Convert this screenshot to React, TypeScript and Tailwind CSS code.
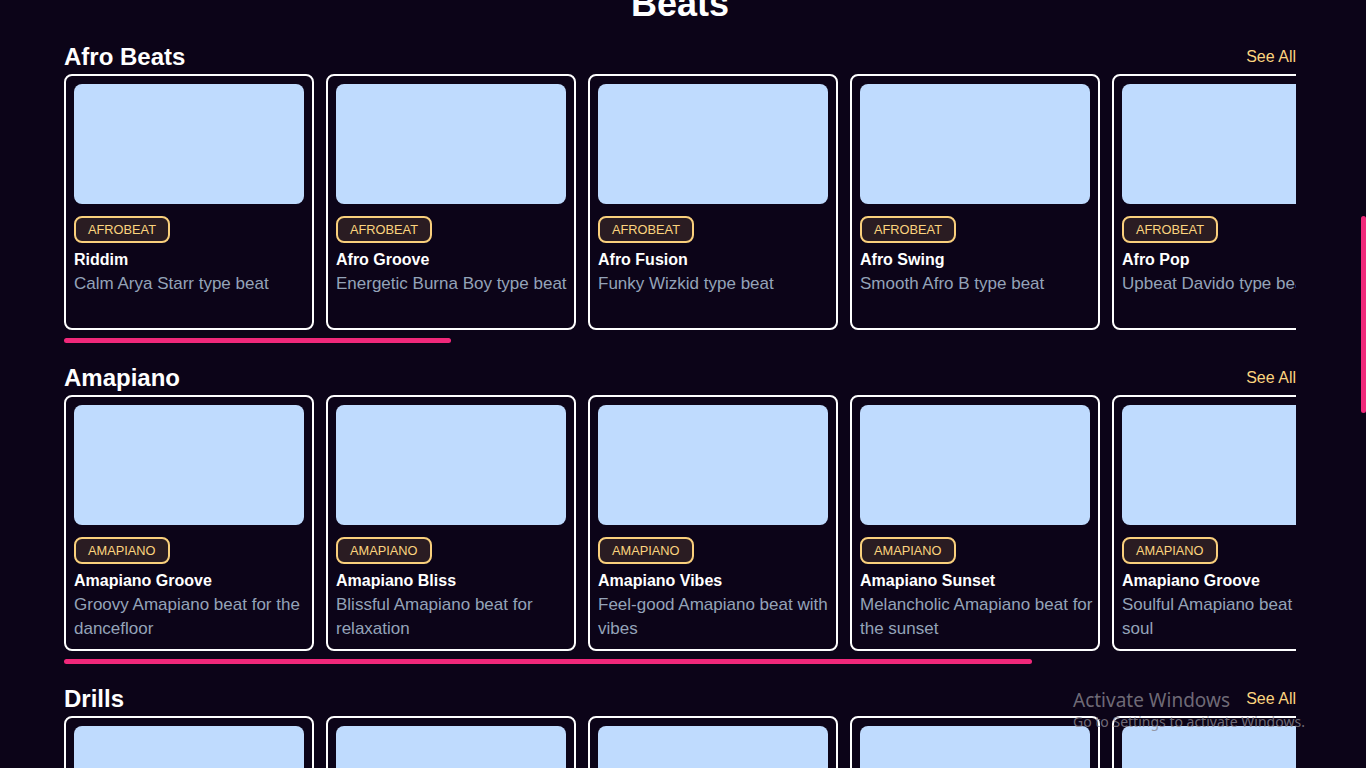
import React from "react";

type Beat = { title: string; description: string };

type Section = { name: string; tag: string; beats: Beat[] };

const sections: Section[] = [
  {
    name: "Afro Beats",
    tag: "AFROBEAT",
    beats: [
      { title: "Riddim", description: "Calm Arya Starr type beat" },
      { title: "Afro Groove", description: "Energetic Burna Boy type beat" },
      { title: "Afro Fusion", description: "Funky Wizkid type beat" },
      { title: "Afro Swing", description: "Smooth Afro B type beat" },
      { title: "Afro Pop", description: "Upbeat Davido type beat" },
      { title: "Lagos Nights", description: "Moody Rema type beat" },
      { title: "Highlife Sun", description: "Bright Tems type beat" },
      { title: "Afro Soul", description: "Mellow Omah Lay type beat" },
      { title: "Street Vibes", description: "Bouncy Asake type beat" },
      { title: "Island Rhythm", description: "Chill Ckay type beat" },
      { title: "Afro Love", description: "Romantic Fireboy type beat" },
      { title: "Naija Bounce", description: "Hype Olamide type beat" },
      { title: "Palm Wine", description: "Laid-back Joeboy type beat" },
      { title: "Sunset Drive", description: "Warm Ruger type beat" },
      { title: "Afro Dance", description: "Lively Kizz Daniel type beat" },
    ],
  },
  {
    name: "Amapiano",
    tag: "AMAPIANO",
    beats: [
      { title: "Amapiano Groove", description: "Groovy Amapiano beat for the dancefloor" },
      { title: "Amapiano Bliss", description: "Blissful Amapiano beat for relaxation" },
      { title: "Amapiano Vibes", description: "Feel-good Amapiano beat with vibes" },
      { title: "Amapiano Sunset", description: "Melancholic Amapiano beat for the sunset" },
      { title: "Amapiano Groove", description: "Soulful Amapiano beat for the soul" },
      { title: "Log Drum", description: "Heavy log drum Amapiano beat" },
    ],
  },
  {
    name: "Drills",
    tag: "DRILL",
    beats: [
      { title: "Dark Drill", description: "Gritty UK drill type beat" },
      { title: "Night Shift", description: "Cold Central Cee type beat" },
      { title: "Slide", description: "Sliding 808 drill beat" },
      { title: "Brooklyn", description: "Pop Smoke type beat" },
      { title: "Block Party", description: "Bouncy NY drill beat" },
      { title: "Opps", description: "Aggressive drill beat" },
      { title: "Cold Case", description: "Eerie piano drill beat" },
      { title: "Midnight", description: "Moody melodic drill beat" },
    ],
  },
];

// card 250 + gap 12, visible row width 1232
const thumbWidth = (count: number) =>
  Math.min(100, (1232 / (count * 262 - 4)) * 100);

function BeatCard({ beat, tag }: { beat: Beat; tag: string }) {
  return (
    <div className="flex w-[250px] min-w-[250px] flex-col rounded-lg border-2 border-white pb-2 pt-2">
      <div className="mx-2 h-[120px] rounded-lg bg-[#bfdbfe]" />
      <div className="mt-3 flex flex-col pl-2">
        <span className="self-start rounded-lg border-2 border-[#f9cf7c] bg-[#2a1c22] px-3 py-1 text-[0.8rem] leading-[15px] text-[#fcd47f]">
          {tag}
        </span>
        <h3 className="mt-[5px] text-base font-bold leading-6 text-white">
          {beat.title}
        </h3>
        <p className="min-h-12 text-[17px] leading-6 text-[#94a3b8]">
          {beat.description}
        </p>
      </div>
    </div>
  );
}

function BeatSection({ section }: { section: Section }) {
  return (
    <section className="flex flex-col">
      <div className="flex h-[34px] items-center justify-between">
        <h2 className="text-2xl font-bold leading-8 text-white">
          {section.name}
        </h2>
        <a className="text-base leading-6 text-[#fcd47f]">See All</a>
      </div>
      <div className="flex gap-3 overflow-hidden">
        {section.beats.map((beat, idx) => (
          <BeatCard key={idx} beat={beat} tag={section.tag} />
        ))}
      </div>
      <div className="mt-2 h-[5px]">
        <div
          className="h-[5px] rounded-full bg-[#f0287a]"
          style={{ width: `${thumbWidth(section.beats.length)}%` }}
        />
      </div>
    </section>
  );
}

export default function App() {
  return (
    <div className="relative flex h-screen overflow-hidden bg-[#0c0418] font-['Liberation_Sans',Arial,sans-serif]">
      <main className="flex min-w-0 flex-1 flex-col px-16">
        <h1 className="-mt-4 text-center text-4xl font-bold leading-10 text-white">
          Beats
        </h1>
        <div className="mt-4 flex flex-col gap-[18px]">
          {sections.map((section) => (
            <BeatSection key={section.name} section={section} />
          ))}
        </div>
      </main>
      <aside className="flex w-[6px] flex-col items-end">
        <div className="mt-[216px] h-[197px] w-[5px] rounded-full bg-[#f0287a]" />
      </aside>

      <div className="pointer-events-none absolute left-[1073px] top-[688px] font-['Noto_Sans','Open_Sans',sans-serif] text-[#8a8690]/80">
        <div className="text-[19px] leading-6">Activate Windows</div>
        <div className="text-[14px] leading-5">
          Go to Settings to activate Windows.
        </div>
      </div>
    </div>
  );
}
